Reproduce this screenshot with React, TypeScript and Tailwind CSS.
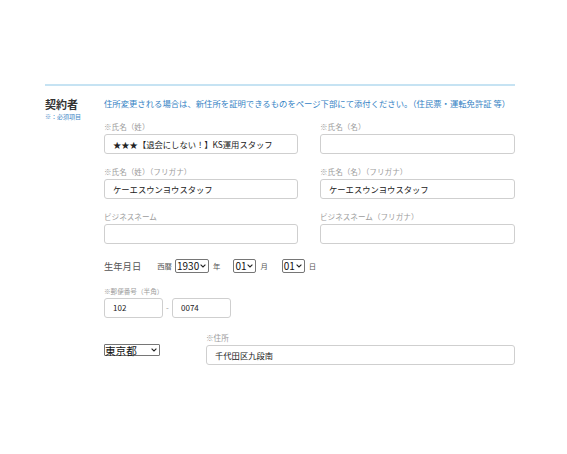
import React from "react";

const font = { fontFamily: '"Noto Sans CJK JP", "Noto Sans", sans-serif' };

function Chevron({ size = 6 }: { size?: number }) {
  return (
    <svg width={size} height={size * 0.6} viewBox="0 0 10 6" className="shrink-0">
      <path d="M1 1 L5 5 L9 1" fill="none" stroke="#222" strokeWidth="1.8" />
    </svg>
  );
}

function Field({ label, value }: { label: string; value?: string }) {
  return (
    <div className="flex flex-col">
      <div className="h-[10px] leading-[10px] text-[7.6px] text-[#9c9c9c] whitespace-nowrap">{label}</div>
      <div className="mt-[2px] h-[20px] border border-[#cfcfcf] rounded-[3px] bg-white flex items-center pl-[8px] text-[8.3px] text-[#222] whitespace-nowrap overflow-hidden">
        {value}
      </div>
    </div>
  );
}

function SelectBox({ value, w, cls }: { value: string; w: string; cls?: string }) {
  return (
    <div className={`${w} h-[14px] border border-[#767676] rounded-[2px] bg-white flex items-center justify-between pl-[1px] pr-[2px] ${cls ?? ""}`}>
      <span className="text-[10px] leading-[12px] text-[#111]">{value}</span>
      <Chevron />
    </div>
  );
}

export default function App() {
  return (
    <div className="w-[567px] h-[454px] bg-white" style={font}>
      <div className="pt-[84px] ml-[45px] w-[470px]">
        <div className="h-[2px] bg-[#c6e3f3]" />
        <div className="flex">
          <div className="w-[59px] pt-[11px] flex flex-col">
            <div className="text-[11px] leading-[14px] font-bold text-[#333] whitespace-nowrap">契約者</div>
            <div className="mt-[2px] text-[6px] leading-[8px] text-[#3d86c6] whitespace-nowrap">※：必須項目</div>
          </div>
          <div className="w-[411px] flex flex-col">
            <div className="mt-[11px] h-[12px] leading-[12px] text-[8.35px] text-[#3482c4] whitespace-nowrap">
              住所変更される場合は、新住所を証明できるものをページ下部にて添付ください。（住民票・運転免許証 等）
            </div>
            <div className="mt-[13px] grid grid-cols-[194px_195px] gap-x-[22px] gap-y-[13px]">
              <Field label="※氏名（姓）" value="★★★【退会にしない！】KS運用スタッフ" />
              <Field label="※氏名（名）" />
              <Field label="※氏名（姓）（フリガナ）" value="ケーエスウンヨウスタッフ" />
              <Field label="※氏名（名）（フリガナ）" value="ケーエスウンヨウスタッフ" />
              <Field label="ビジネスネーム" />
              <Field label="ビジネスネーム（フリガナ）" />
            </div>
            <div className="mt-[14px] h-[16px] flex items-center text-[#555]">
              <span className="text-[9.3px] leading-[16px]">生年月日</span>
              <span className="ml-[16px] text-[7.4px]">西暦</span>
              <SelectBox value="1930" w="w-[34px]" cls="ml-[3px]" />
              <span className="ml-[4px] text-[7.4px]">年</span>
              <SelectBox value="01" w="w-[23px]" cls="ml-[13px]" />
              <span className="ml-[4px] text-[7.4px]">月</span>
              <SelectBox value="01" w="w-[23px]" cls="ml-[14px]" />
              <span className="ml-[4px] text-[7.4px]">日</span>
            </div>
            <div className="mt-[12px] flex flex-col">
              <div className="h-[10px] leading-[10px] text-[6.6px] text-[#9c9c9c] whitespace-nowrap">※郵便番号（半角）</div>
              <div className="mt-[2px] flex items-center">
                <div className="w-[59px] h-[20px] border border-[#cfcfcf] rounded-[3px] flex items-center pl-[8px] text-[8px] text-[#222]">102</div>
                <span className="w-[9px] text-center text-[8px] text-[#999]">-</span>
                <div className="w-[59px] h-[20px] border border-[#cfcfcf] rounded-[3px] flex items-center pl-[8px] text-[8px] text-[#222]">0074</div>
              </div>
            </div>
            <div className="mt-[15px] flex">
              <div className="w-[102px] pt-[11px]">
                <div className="w-[56px] h-[12px] border border-[#767676] rounded-[1px] bg-white flex items-center justify-between pr-[2px]">
                  <span className="text-[10.6px] leading-[11px] text-[#111]">東京都</span>
                  <Chevron />
                </div>
              </div>
              <div className="flex-1">
                <Field label="※住所" value="千代田区九段南" />
              </div>
            </div>
          </div>
        </div>
      </div>
    </div>
  );
}
